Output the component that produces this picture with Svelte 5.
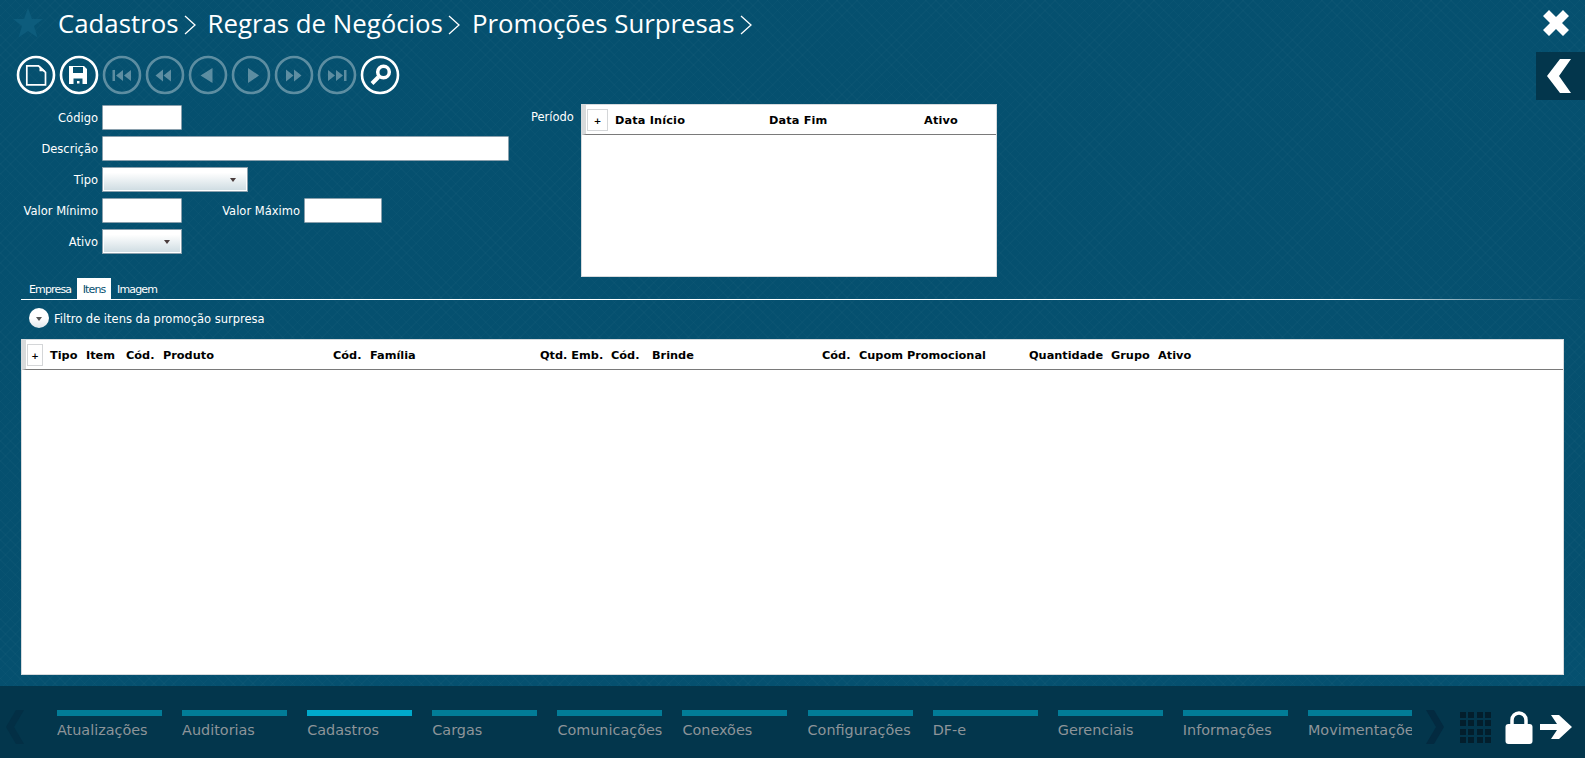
<script>
  const crumbs = ["Cadastros", "Regras de Negócios", "Promoções Surpresas"];
  const navItems = ["Atualizações", "Auditorias", "Cadastros", "Cargas", "Comunicações", "Conexões", "Configurações", "DF-e", "Gerenciais", "Informações", "Movimentações"];
  const periodCols = ["Data Início", "Data Fim", "Ativo"];
  const itemCols = ["Tipo", "Item", "Cód.", "Produto", "Cód.", "Família", "Qtd. Emb.", "Cód.", "Brinde", "Cód.", "Cupom Promocional", "Quantidade", "Grupo", "Ativo"];
  const tabs = ["Empresa", "Itens", "Imagem"];

  // path data for the record navigation buttons, drawn in a 40x40 box
  const navButtons = [
    "M10.500 15h2.500v11h-2.500zM14 20.500l7-5.500v11zM22 20.500l7-5.500v11z",
    "M10.500 20.500l7.500-6v12zM18.500 20.500l7.500-6v12z",
    "M12.500 20.500l12-7.500v15z",
    "M17 13l11 7.500-11 7.500z",
    "M12 14.500l7.500 6-7.500 6zM20 14.500l7.500 6-7.500 6z",
    "M11 15l7 5.500-7 5.500zM19 15l7 5.500-7 5.500zM27 15h2.500v11H27z"
  ];
  const gridCells = Array.from({ length: 16 });
</script>

<div class="page">
  <header class="top">
    <svg class="star" viewBox="0 0 32 32" width="32" height="32"><path d="M16 1l4 11h11l-9 7 3.500 11.500L16 24l-9.500 6.500L10 19l-9-7h11z" /></svg>
    <nav class="crumbs">
      {#each crumbs as c}
        <span class="crumb">{c}</span>
        <svg class="sep" viewBox="0 0 14 20" width="14" height="20"><path d="M2 1l10 9-10 9" /></svg>
      {/each}
    </nav>
    <svg class="close" viewBox="0 0 26 26" width="26" height="26"><path d="M6 0l7 7 7-7 6 6-7 7 7 7-6 6-7-7-7 7-6-6 7-7-7-7z" /></svg>
  </header>

  <div class="toolbar">
    <button class="tool" aria-label="Novo">
      <svg viewBox="0 0 40 40"><circle cx="20" cy="20" r="18" /><path class="line" d="M10.800 10.800h11.700l7 6.500v12.500H10.800z" /><path class="solid" d="M23.500 10.800l6 5.500h-6z" /></svg>
    </button>
    <button class="tool" aria-label="Salvar">
      <svg viewBox="0 0 40 40"><circle cx="20" cy="20" r="18" /><path class="solid" fill-rule="evenodd" d="M10 11h15l3 3v15H10zM14 12v6h10v-6zM14.500 23.500V29h9v-5.500zM18 26h2.500v2.500H18z" /></svg>
    </button>
    {#each navButtons as d}
      <button class="tool off" aria-label="Navegar">
        <svg viewBox="0 0 40 40"><circle cx="20" cy="20" r="18" /><path class="solid" {d} /></svg>
      </button>
    {/each}
    <button class="tool" aria-label="Pesquisar">
      <svg viewBox="0 0 40 40"><circle cx="20" cy="20" r="18" /><circle class="lens" cx="23.500" cy="17" r="5.800" /><path class="handle" d="M18.500 22L12 28.500" /></svg>
    </button>
    <button class="back" aria-label="Voltar">
      <svg viewBox="0 0 26 34" width="26" height="34"><path d="M14 0h11L13 17l12 17H14L1 17z" /></svg>
    </button>
  </div>

  <section class="form-area">
    <div class="fields">
      <div class="row"><label>Código</label><div class="input small"></div></div>
      <div class="row"><label>Descrição</label><div class="input wide"></div></div>
      <div class="row"><label>Tipo</label><div class="select medium"><i></i></div></div>
      <div class="row">
        <label>Valor Mínimo</label><div class="input small"></div>
        <label class="inner">Valor Máximo</label><div class="input max"></div>
      </div>
      <div class="row"><label>Ativo</label><div class="select small"><i></i></div></div>
    </div>
    <div class="period">
      <label>Período</label>
      <div class="table period-table">
        <div class="thead">
          <button class="add">+</button>
          {#each periodCols as col}<span>{col}</span>{/each}
        </div>
      </div>
    </div>
  </section>

  <div class="tabs">
    {#each tabs as t}
      <span class="tab" class:active={t === "Itens"}>{t}</span>
    {/each}
  </div>

  <div class="filter">
    <span class="toggle"><i></i></span>
    <span>Filtro de itens da promoção surpresa</span>
  </div>

  <div class="table items-table">
    <div class="thead">
      <button class="add">+</button>
      {#each itemCols as col}<span>{col}</span>{/each}
    </div>
  </div>

  <footer class="bottom">
    <svg class="arrow dim" viewBox="0 0 18 34" width="18" height="34"><path d="M10 0h8L8 17l10 17h-8L0 17z" /></svg>
    <div class="menu">
      {#each navItems as item}
        <div class="menu-item" class:current={item === "Cadastros"}>
          <div class="bar"></div>
          <span>{item}</span>
        </div>
      {/each}
    </div>
    <svg class="arrow" viewBox="0 0 18 34" width="18" height="34"><path d="M0 0h8l10 17L8 34H0l10-17z" /></svg>
    <div class="apps">
      {#each gridCells as _}<i></i>{/each}
    </div>
    <svg class="lock" viewBox="0 0 28 34" width="28" height="34"><path class="shackle" d="M7 16V10a7 7 0 0 1 14 0v6" /><rect x="0.500" y="14" width="27" height="20" rx="3" /></svg>
    <svg class="go" viewBox="0 0 32 24" width="32" height="24"><path d="M0 9h17l-6-9h8l13 12-13 12h-8l6-9H0z" /></svg>
  </footer>
</div>

<style>
  :global(body) {
    margin: 0;
    font-family: "DejaVu Sans", Verdana, sans-serif;
  }
  .page {
    width: 1585px;
    height: 758px;
    display: flex;
    flex-direction: column;
    overflow: hidden;
    background-color: #05506f;
    background-image:
      repeating-linear-gradient(45deg, rgba(255,255,255,0.015) 0 1px, transparent 1px 7px),
      repeating-linear-gradient(-45deg, rgba(255,255,255,0.015) 0 1px, transparent 1px 7px);
    color: #fff;
  }
  .top {
    height: 52px;
    display: flex;
    align-items: center;
    box-sizing: border-box;
    padding: 0 16px 6px 12px;
  }
  .star { fill: #0d5c7c; margin-right: 14px; }
  .crumbs { display: flex; align-items: center; flex: 1; }
  .crumb { font-family: "Open Sans", sans-serif; font-size: 25.800px; }
  .sep { fill: none; stroke: #fff; stroke-width: 1.3; margin: 3px 11px 0 4px; }
  .close { fill: #fff; }

  .toolbar {
    height: 48px;
    display: flex;
    align-items: center;
    gap: 3px;
    padding: 0 0 2px 16px;
    box-sizing: border-box;
  }
  .tool {
    width: 40px;
    height: 40px;
    padding: 0;
    border: 0;
    background: none;
  }
  .tool svg { display: block; width: 40px; height: 40px; }
  .tool circle { fill: none; stroke: #fff; stroke-width: 2.600; }
  .tool .line { fill: none; stroke: #fff; stroke-width: 1.700; }
  .tool .solid { fill: #fff; }
  .tool .handle { stroke: #fff; stroke-width: 4; fill: none; }
  .tool .lens { stroke-width: 3.500; }
  .tool.off { opacity: 0.35; }
  .back {
    margin-left: auto;
    width: 49px;
    height: 48px;
    border: 0;
    padding: 0 4px 0 0;
    background: #03364c;
    align-self: flex-start;
  }
  .back svg { display: block; margin: auto; fill: #fff; }

  .form-area {
    display: flex;
    height: 178px;
    box-sizing: border-box;
    padding-top: 5px;
  }
  .fields {
    width: 531px;
    display: flex;
    flex-direction: column;
    gap: 6px;
  }
  .row { display: flex; align-items: center; height: 25px; }
  label { font-size: 11.500px; white-space: nowrap; }
  .row > label:first-child { width: 98px; text-align: right; margin-right: 4px; }
  .row .inner { width: 118px; text-align: right; margin-right: 4px; }
  .input {
    height: 25px;
    box-sizing: border-box;
    background: #fff;
    border: 1px solid #8aa0ad;
    border-radius: 1px;
  }
  .small { width: 80px; }
  .wide { width: 407px; }
  .max { width: 78px; }
  .select {
    height: 25px;
    box-sizing: border-box;
    position: relative;
    background: linear-gradient(#fff 20%, #cddbe1);
    border: 1px solid #8aa0ad;
    box-shadow: inset 0 0 0 1px #fff;
  }
  .medium { width: 146px; }
  .select i {
    position: absolute;
    right: 11px;
    top: 10px;
    border: 3.500px solid transparent;
    border-top: 4px solid #4a3c3c;
    border-bottom: 0;
  }
  .period { display: flex; gap: 7px; align-items: flex-start; margin-top: -1px; }
  .period label { width: 43px; margin-top: 6px; }
  .table {
    background: #fff;
    color: #000;
    box-sizing: border-box;
    border: 1px solid #d6dadd;
  }
  .period-table { width: 416px; height: 173px; }
  .thead {
    display: grid;
    align-items: center;
    height: 30px;
    box-sizing: border-box;
    border-bottom: 1px solid #7a7a7a;
    border-left: 4px solid #d8dadb;
    font-size: 11.300px;
    font-weight: bold;
    white-space: nowrap;
  }
  .thead span { padding-top: 2px; }
  .period-table .thead { grid-template-columns: 29px 154px 155px 1fr; }
  .period-table .thead span { letter-spacing: 0.15px; }
  .items-table .thead {
    grid-template-columns: 24px 36px 40px 37px 170px 37px 170px 71px 41px 170px 37px 170px 82px 47px 1fr;
  }
  .add {
    width: 21px;
    height: 22px;
    margin-left: 1px;
    padding: 3px 0 0;
    background: #fff;
    border: 1px solid #d4d6d8;
    font: bold 9px "DejaVu Sans", sans-serif;
    color: #000;
  }
  .items-table .add { width: 16px; }

  .tabs {
    display: flex;
    height: 22px;
    box-sizing: border-box;
    margin-left: 21px;
    padding-left: 2px;
    align-items: stretch;
    border-bottom: 1px solid;
    border-image: linear-gradient(to right, #fff 85%, transparent) 1;
    font-size: 11px;
  }
  .tab { padding: 1px 5.500px 0 6px; display: flex; align-items: center; letter-spacing: -0.850px; }
  .tab.active { background: #fff; color: #05506f; }

  .filter {
    height: 39px;
    display: flex;
    align-items: center;
    gap: 5px;
    padding-left: 29px;
    font-size: 11.500px;
    box-sizing: border-box;
    padding-bottom: 4px;
  }
  .filter > span:last-child { padding-top: 2px; }
  .toggle {
    width: 20px;
    height: 20px;
    border-radius: 50%;
    background: linear-gradient(#fff 50%, #dfe6ea);
    display: flex;
    align-items: center;
    justify-content: center;
  }
  .toggle i {
    border: 3.500px solid transparent;
    border-top: 4px solid #555;
    border-bottom: 0;
    margin-top: 2px;
  }
  .items-table { margin: 0 21px 11px; flex: 1; }

  .bottom {
    height: 72px;
    flex: none;
    background: #03364c;
    display: flex;
    align-items: flex-start;
    box-sizing: border-box;
    padding: 24px 0 0 6px;
  }
  .arrow { fill: #032a40; flex: none; }
  .arrow.dim { fill: #032f45; }
  .menu {
    width: 1355px;
    margin: 0 14px 0 33px;
    display: flex;
    gap: 20.100px;
    overflow: hidden;
    flex: none;
  }
  .menu-item {
    width: 105px;
    flex: none;
    margin-top: -1px;
    overflow: hidden;
    white-space: nowrap;
    color: #8d9499;
    font-size: 14.400px;
  }
  .bar { height: 7px; background: #027c97; margin-bottom: 6px; }
  .current .bar { background: #00a9cb; }
  .apps {
    display: grid;
    grid-template-columns: repeat(4, 6px);
    grid-auto-rows: 6px;
    gap: 2.400px;
    margin: 2px 14px 0 16px;
    flex: none;
  }
  .apps i { background: #031e2c; }
  .lock { fill: #fff; flex: none; margin-right: 7px; }
  .lock .shackle { fill: none; stroke: #fff; stroke-width: 3.500; }
  .go { fill: #fff; flex: none; margin-top: 5px; }
</style>
